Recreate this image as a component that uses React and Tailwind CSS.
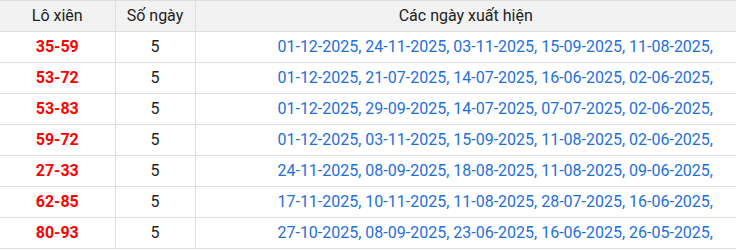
const rows = [
  ["35-59", "01-12-2025, 24-11-2025, 03-11-2025, 15-09-2025, 11-08-2025,"],
  ["53-72", "01-12-2025, 21-07-2025, 14-07-2025, 16-06-2025, 02-06-2025,"],
  ["53-83", "01-12-2025, 29-09-2025, 14-07-2025, 07-07-2025, 02-06-2025,"],
  ["59-72", "01-12-2025, 03-11-2025, 15-09-2025, 11-08-2025, 02-06-2025,"],
  ["27-33", "24-11-2025, 08-09-2025, 18-08-2025, 11-08-2025, 09-06-2025,"],
  ["62-85", "17-11-2025, 10-11-2025, 11-08-2025, 28-07-2025, 16-06-2025,"],
  ["80-93", "27-10-2025, 08-09-2025, 23-06-2025, 16-06-2025, 26-05-2025,"],
];

export default function App() {
  return (
    <div className="w-[736px] h-[250px] overflow-hidden bg-white font-['Roboto',sans-serif] text-[16px] text-[#222]">
      <table className="w-full border-collapse table-fixed">
        <colgroup>
          <col className="w-[115px]" />
          <col className="w-[80px]" />
          <col />
        </colgroup>
        <thead>
          <tr className="h-[31px] bg-[#f2f2f2] border-t border-b border-[#dedede]">
            <th className="font-normal text-center border-r border-[#dedede]">Lô xiên</th>
            <th className="font-normal text-center border-r border-[#dedede]">Số ngày</th>
            <th className="font-normal text-center">Các ngày xuất hiện</th>
          </tr>
        </thead>
        <tbody>
          {rows.map(([pair, dates]) => (
            <tr key={pair} className="h-[31px] border-b border-[#dedede]">
              <td className="text-center font-bold text-[#ff0000] border-r border-[#dedede]">{pair}</td>
              <td className="text-center border-r border-[#dedede]">5</td>
              <td className="text-right pr-[23px] text-[#1e6fdc] whitespace-nowrap">{dates}</td>
            </tr>
          ))}
        </tbody>
      </table>
    </div>
  );
}
